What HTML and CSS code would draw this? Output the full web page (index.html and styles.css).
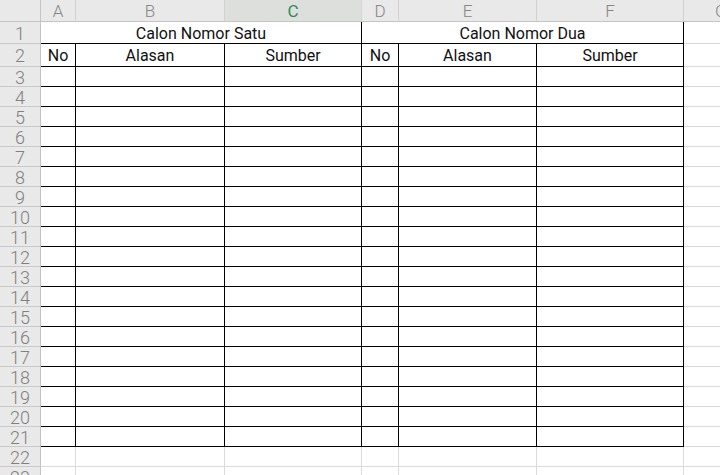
FILE: index.html
```html
<!DOCTYPE html>
<html>
<head>
<meta charset="utf-8">
<link rel="stylesheet" href="styles.css">
</head>
<body>
<div class="sheet">
  <div class="ch corner"></div>
  <div class="ch">A</div>
  <div class="ch">B</div>
  <div class="ch sel">C</div>
  <div class="ch">D</div>
  <div class="ch">E</div>
  <div class="ch">F</div>
  <div class="ch last">G</div>

  <div class="rh">1</div>
  <div class="c b span3">Calon Nomor Satu</div>
  <div class="c b span3">Calon Nomor Dua</div>
  <div class="c"></div>

  <div class="rh">2</div>
  <div class="c b">No</div>
  <div class="c b">Alasan</div>
  <div class="c b">Sumber</div>
  <div class="c b">No</div>
  <div class="c b">Alasan</div>
  <div class="c b">Sumber</div>
  <div class="c"></div>

  <div class="rh">3</div><div class="c b"></div><div class="c b"></div><div class="c b"></div><div class="c b"></div><div class="c b"></div><div class="c b"></div><div class="c"></div>
  <div class="rh">4</div><div class="c b"></div><div class="c b"></div><div class="c b"></div><div class="c b"></div><div class="c b"></div><div class="c b"></div><div class="c"></div>
  <div class="rh">5</div><div class="c b"></div><div class="c b"></div><div class="c b"></div><div class="c b"></div><div class="c b"></div><div class="c b"></div><div class="c"></div>
  <div class="rh">6</div><div class="c b"></div><div class="c b"></div><div class="c b"></div><div class="c b"></div><div class="c b"></div><div class="c b"></div><div class="c"></div>
  <div class="rh">7</div><div class="c b"></div><div class="c b"></div><div class="c b"></div><div class="c b"></div><div class="c b"></div><div class="c b"></div><div class="c"></div>
  <div class="rh">8</div><div class="c b"></div><div class="c b"></div><div class="c b"></div><div class="c b"></div><div class="c b"></div><div class="c b"></div><div class="c"></div>
  <div class="rh">9</div><div class="c b"></div><div class="c b"></div><div class="c b"></div><div class="c b"></div><div class="c b"></div><div class="c b"></div><div class="c"></div>
  <div class="rh">10</div><div class="c b"></div><div class="c b"></div><div class="c b"></div><div class="c b"></div><div class="c b"></div><div class="c b"></div><div class="c"></div>
  <div class="rh">11</div><div class="c b"></div><div class="c b"></div><div class="c b"></div><div class="c b"></div><div class="c b"></div><div class="c b"></div><div class="c"></div>
  <div class="rh">12</div><div class="c b"></div><div class="c b"></div><div class="c b"></div><div class="c b"></div><div class="c b"></div><div class="c b"></div><div class="c"></div>
  <div class="rh">13</div><div class="c b"></div><div class="c b"></div><div class="c b"></div><div class="c b"></div><div class="c b"></div><div class="c b"></div><div class="c"></div>
  <div class="rh">14</div><div class="c b"></div><div class="c b"></div><div class="c b"></div><div class="c b"></div><div class="c b"></div><div class="c b"></div><div class="c"></div>
  <div class="rh">15</div><div class="c b"></div><div class="c b"></div><div class="c b"></div><div class="c b"></div><div class="c b"></div><div class="c b"></div><div class="c"></div>
  <div class="rh">16</div><div class="c b"></div><div class="c b"></div><div class="c b"></div><div class="c b"></div><div class="c b"></div><div class="c b"></div><div class="c"></div>
  <div class="rh">17</div><div class="c b"></div><div class="c b"></div><div class="c b"></div><div class="c b"></div><div class="c b"></div><div class="c b"></div><div class="c"></div>
  <div class="rh">18</div><div class="c b"></div><div class="c b"></div><div class="c b"></div><div class="c b"></div><div class="c b"></div><div class="c b"></div><div class="c"></div>
  <div class="rh">19</div><div class="c b"></div><div class="c b"></div><div class="c b"></div><div class="c b"></div><div class="c b"></div><div class="c b"></div><div class="c"></div>
  <div class="rh">20</div><div class="c b"></div><div class="c b"></div><div class="c b"></div><div class="c b"></div><div class="c b"></div><div class="c b"></div><div class="c"></div>
  <div class="rh">21</div><div class="c b"></div><div class="c b"></div><div class="c b"></div><div class="c b"></div><div class="c b"></div><div class="c b"></div><div class="c"></div>
  <div class="rh">22</div><div class="c"></div><div class="c"></div><div class="c"></div><div class="c"></div><div class="c"></div><div class="c"></div><div class="c"></div>
  <div class="rh">23</div><div class="c"></div><div class="c"></div><div class="c"></div><div class="c"></div><div class="c"></div><div class="c"></div><div class="c"></div>
</div>
</body>
</html>
```
FILE: styles.css
```css
html, body {
  margin: 0;
  padding: 0;
  background: #ffffff;
  overflow: hidden;
}
.sheet {
  display: grid;
  grid-template-columns: 41px 35px 149px 137px 37px 138px 147px 1fr;
  grid-template-rows: 22px 22px 23px;
  grid-auto-rows: 20px;
  width: 720px;
  height: 475px;
  overflow: hidden;
  font-family: Roboto, "Noto Sans", sans-serif;
}
.ch {
  box-sizing: border-box;
  background: #e9e9e9;
  border-right: 1px solid #d2d2d2;
  border-bottom: 1px solid #c4c4c4;
  color: #868686;
  font-size: 17px;
  font-weight: 300;
  display: flex;
  align-items: center;
  justify-content: center;
  line-height: 1;
  padding-top: 1px;
}
.ch.corner {
  border-right: 1px solid #c4c4c4;
}
.ch.sel {
  background: #dcdfdc;
  color: #2e8b57;
  font-weight: 400;
}
.ch.last {
  justify-content: flex-start;
  padding-left: 31px;
}
.rh {
  box-sizing: border-box;
  background: #e9e9e9;
  border-right: 1px solid #c4c4c4;
  border-bottom: 1px solid #c9c9c9;
  color: #808080;
  font-size: 18px;
  font-weight: 300;
  display: flex;
  align-items: center;
  justify-content: center;
  line-height: 1;
  padding-top: 2px;
}
.c {
  box-sizing: border-box;
  border-right: 1px solid #dadada;
  border-bottom: 1px solid #dadada;
  color: #111111;
  font-size: 16px;
  display: flex;
  align-items: center;
  justify-content: center;
  line-height: 1;
  padding-top: 2px;
}
.c.b {
  border-right-color: #000000;
  border-bottom-color: #000000;
}
.span3 {
  grid-column: span 3;
}
```
